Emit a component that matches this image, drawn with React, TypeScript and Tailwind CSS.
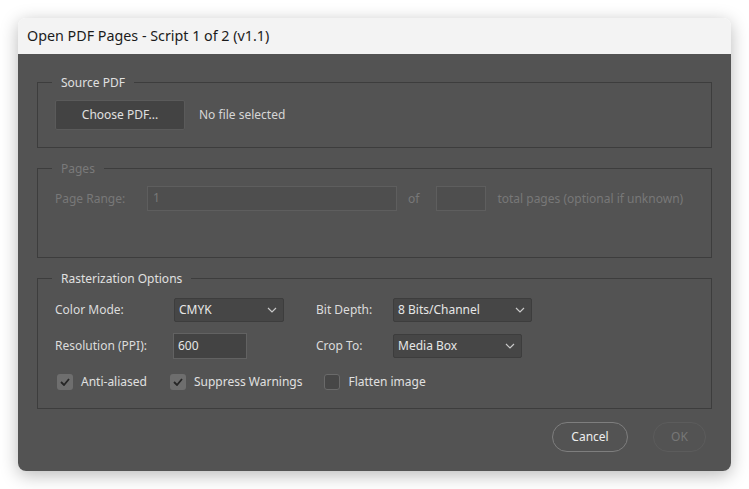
import React from 'react';

const Chevron: React.FC = () => (
    <svg width="10" height="6" viewBox="0 0 10 6" className="shrink-0">
        <polyline points="1,1 5,5 9,1" fill="none" stroke="#c8c8c8" strokeWidth="1.2" />
    </svg>
);

const Select: React.FC<{ value: string; width: string }> = ({ value, width }) => (
    <div className={`${width} h-[24px] flex items-center justify-between pl-[4px] pr-[6px] bg-[#464646] border border-[#3d3d3d] rounded-[2px] text-[#e6e6e6]`}>
        <span>{value}</span>
        <Chevron />
    </div>
);

const CheckBox: React.FC<{ checked?: boolean; label: string }> = ({ checked, label }) => (
    <label className="flex items-center h-[16px]">
        <span
            className={
                checked
                    ? 'w-[16px] h-[16px] ml-[2px] rounded-[3px] bg-[#6e6e6e] flex items-center justify-center'
                    : 'w-[16px] h-[16px] ml-[2px] rounded-[3px] bg-[#474747] border border-[#6a6a6a]'
            }
        >
            {checked && (
                <svg width="10" height="8" viewBox="0 0 10 8">
                    <polyline points="1,4 4,7 9,1" fill="none" stroke="#262626" strokeWidth="1.8" />
                </svg>
            )}
        </span>
        <span className="ml-[8px] text-[#e0e0e0]">{label}</span>
    </label>
);

const Legend: React.FC<{ children: React.ReactNode; disabled?: boolean }> = ({ children, disabled }) => (
    <legend className={`ml-[14px] px-[9px] leading-[17px] ${disabled ? 'text-[#7a7a7a]' : 'text-[#e0e0e0]'}`}>
        {children}
    </legend>
);

export default function App() {
    return (
        <div className="min-h-screen bg-white pt-[18px] pl-[18px] font-['Noto_Sans',sans-serif] text-[12px]">
            <div className="w-[713px] h-[453px] rounded-[8px] overflow-hidden flex flex-col shadow-[0_4px_18px_rgba(0,0,0,0.28)]">
                {/* Title bar */}
                <div className="h-[36px] bg-[#f3f3f3] flex items-center pl-[9px] text-[14.3px] text-[#1b1b1b] shrink-0">
                    Open PDF Pages - Script 1 of 2 (v1.1)
                </div>

                <div className="flex-1 bg-[#535353] pt-[20px] px-[19px] flex flex-col">
                    {/* Source PDF */}
                    <fieldset className="border border-[#3d3d3d]">
                        <Legend>Source PDF</Legend>
                        <div className="pt-[9px] pb-[17px] pl-[17px] flex items-center">
                            <button className="w-[130px] h-[30px] bg-[#434343] border border-[#5a5a5a] rounded-[2px] text-[#e0e0e0]">
                                Choose PDF...
                            </button>
                            <span className="ml-[14px] text-[#d6d6d6]">No file selected</span>
                        </div>
                    </fieldset>

                    {/* Pages (disabled) */}
                    <fieldset className="mt-[12px] border border-[#3d3d3d]">
                        <Legend disabled>Pages</Legend>
                        <div className="pt-[9px] pb-[46px] pl-[17px] flex items-center text-[#787878]">
                            <span className="w-[92px]">Page Range:</span>
                            <div className="w-[250px] h-[25px] bg-[#4e4e4e] border border-[#5e5e5e] pl-[5px] flex items-start pt-[2px]">1</div>
                            <span className="ml-[11px]">of</span>
                            <div className="ml-[17px] w-[50px] h-[25px] bg-[#4e4e4e] border border-[#5e5e5e]" />
                            <span className="ml-[11px]">total pages (optional if unknown)</span>
                        </div>
                    </fieldset>

                    {/* Rasterization Options */}
                    <fieldset className="mt-[12px] border border-[#3d3d3d]">
                        <Legend>Rasterization Options</Legend>
                        <div className="pt-[11px] pb-[18px] pl-[17px] flex flex-col text-[#dcdcdc]">
                            <div className="flex items-center h-[24px]">
                                <span className="w-[119px]">Color Mode:</span>
                                <Select value="CMYK" width="w-[110px]" />
                                <span className="ml-[32px] w-[77px]">Bit Depth:</span>
                                <Select value="8 Bits/Channel" width="w-[139px]" />
                            </div>
                            <div className="flex items-center h-[26px] mt-[11px]">
                                <span className="w-[118px]">Resolution (PPI):</span>
                                <div className="w-[74px] h-[26px] bg-[#434343] border border-[#626262] pl-[4px] pt-[3px] text-[#e6e6e6]">600</div>
                                <span className="ml-[69px] w-[77px]">Crop To:</span>
                                <Select value="Media Box" width="w-[129px]" />
                            </div>
                            <div className="flex items-center mt-[15px]">
                                <CheckBox checked label="Anti-aliased" />
                                <div className="ml-[21px]">
                                    <CheckBox checked label="Suppress Warnings" />
                                </div>
                                <div className="ml-[20px]">
                                    <CheckBox label="Flatten image" />
                                </div>
                            </div>
                        </div>
                    </fieldset>

                    {/* Buttons */}
                    <div className="mt-[13px] flex justify-end pr-[6px] gap-[25px]">
                        <button className="w-[76px] h-[30px] rounded-full border border-[#7e7e7e] text-[#eeeeee]">Cancel</button>
                        <button className="w-[53px] h-[30px] rounded-full border border-[#5c5c5c] text-[#777777]">OK</button>
                    </div>
                </div>
            </div>
        </div>
    );
}
